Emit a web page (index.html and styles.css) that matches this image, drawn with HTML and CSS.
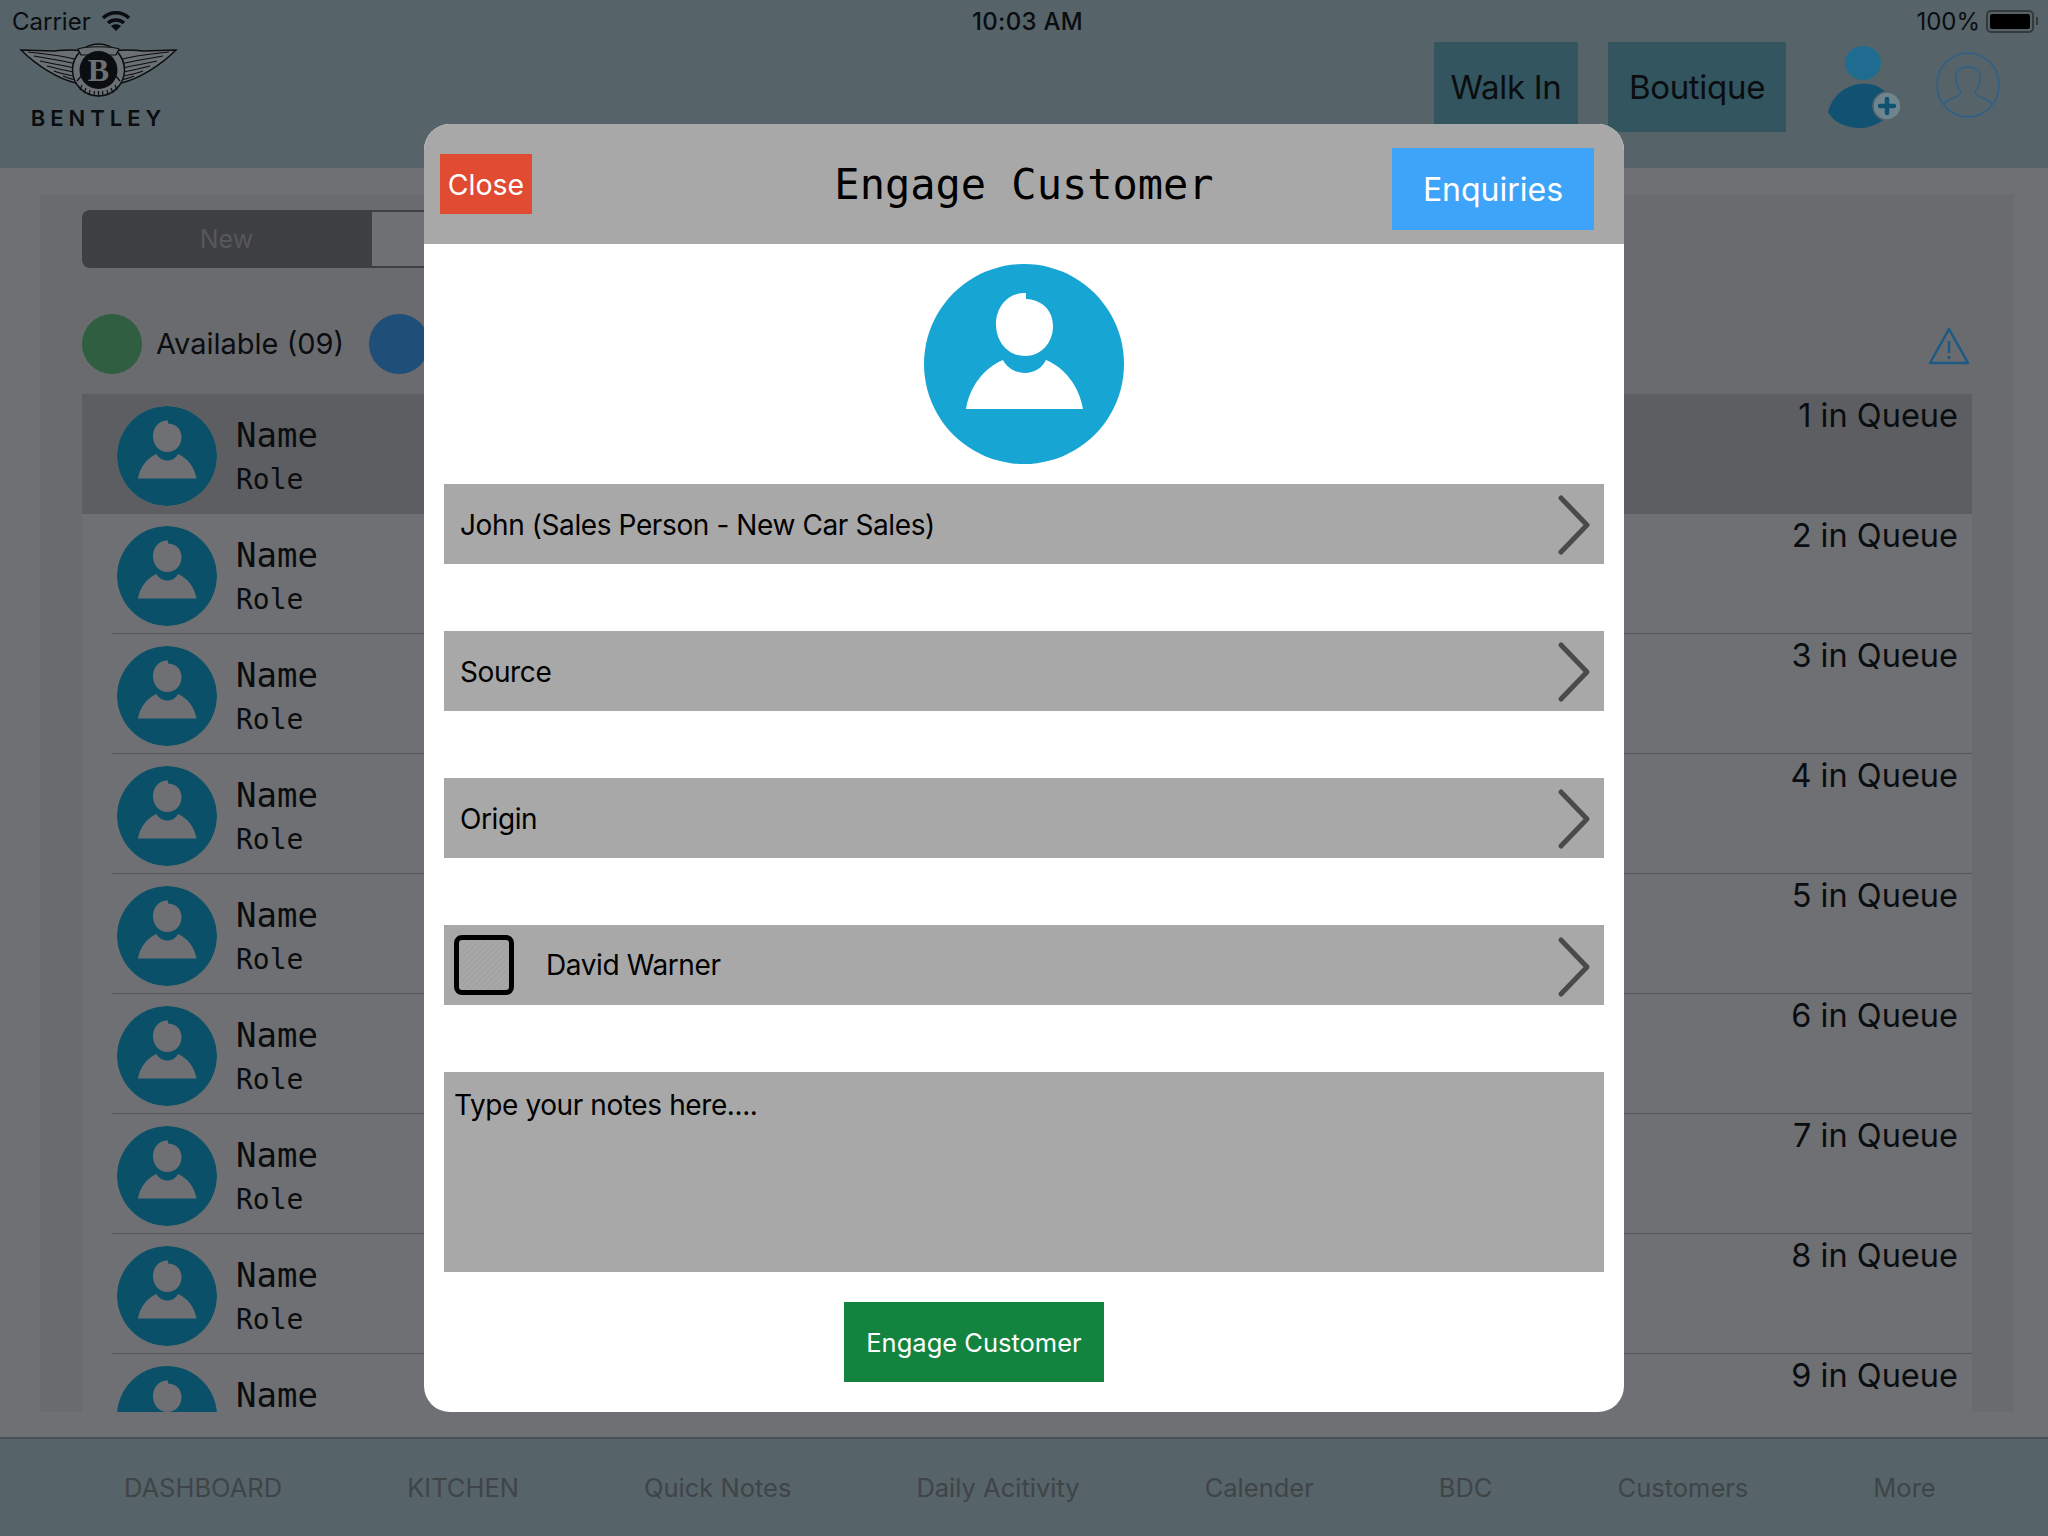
FILE: index.html
```html
<!DOCTYPE html>
<html lang="en">
<head>
  <meta charset="UTF-8">
  <title>Engage Customer</title>
  <link rel="stylesheet" href="styles.css">
</head>
<body>
  <svg class="defs" width="0" height="0">
    <symbol id="person" viewBox="0 0 200 200">
      <path fill-rule="evenodd" d="M100 0a100 100 0 1 0 .01 0z
        M102 29C84 28 72 43 72 60c0 18 12 32 29 32 16 0 28-13 28-30 0-15-10-26-27-27z
        M79 96C60 104 46 122 42 145H159C155 122 141 104 122 96c-4 8-12 13-21 13s-18-5-22-13z"/>
    </symbol>
    <symbol id="chevron" viewBox="0 0 36 62">
      <path d="M5 4L31 31 5 58" fill="none" stroke="currentColor" stroke-width="5" stroke-linecap="round" stroke-linejoin="round"/>
    </symbol>
    <g id="wing" fill="none" stroke="#0b0e10" stroke-width="1.200">
      <path d="M1 3L34 4C44 3 54 2 60 4L66 12 56 36C38 32 16 18 1 3z" fill="#6b7074" stroke-width="1.500"/>
      <path d="M8 5C28 7 46 9 62 14M14 9C30 12 46 14 60 18M20 14C34 17 46 19 59 22M27 19C38 22 48 24 58 26M34 24C42 27 50 28 57 30M43 29C47 31 52 32 56 33"/>
    </g>
  </svg>

  <header class="topbar">
    <div class="status">
      <div class="status-left">
        <span>Carrier</span>
        <svg class="wifi" viewBox="0 0 30 20">
          <g fill="none" stroke="#0a0d10" stroke-width="3.400">
            <path d="M2 7C9 0 21 0 28 7"/>
            <path d="M7 12C11.500 8 18.500 8 23 12"/>
          </g>
          <path d="M15 20L10 15C13 12.500 17 12.500 20 15z"/>
        </svg>
      </div>
      <span class="clock">10:03 AM</span>
      <div class="status-right">
        <span>100%</span>
        <span class="battery"><span class="battery-fill"></span></span>
        <span class="battery-tip"></span>
      </div>
    </div>
    <div class="toolbar">
      <div class="logo">
        <svg class="wings" viewBox="0 0 157 50">
          <use href="#wing"/>
          <use href="#wing" transform="matrix(-1 0 0 1 157 0)"/>
          <circle cx="78.500" cy="23" r="26" fill="#6b7074" stroke="#0b0e10" stroke-width="1.500"/>
          <path d="M58 2C66 -1 91 -1 99 2L96 8H61z" fill="#6b7074" stroke="#0b0e10" stroke-width="1.200"/>
          <g stroke="#0b0e10" stroke-width="1.200">
            <path d="M62 38L60 43M66 41L64 46M70 43L69 48M74.500 44L74 49M78.500 44V50M82.500 44L83 49M87 43L88 48M91 41L93 46M95 38L97 43"/>
            <path d="M57 34L62 28M100 34L95 28" />
          </g>
          <circle cx="78.500" cy="23" r="19" fill="#0b0e10"/>
          <text class="logo-b" x="78.500" y="34" text-anchor="middle">B</text>
        </svg>
        <span class="logo-name">BENTLEY</span>
      </div>
      <div class="tool-actions">
        <button class="tool-btn">Walk In</button>
        <button class="tool-btn">Boutique</button>
        <svg class="add-user" viewBox="0 0 74 82">
          <ellipse cx="35" cy="17" rx="18" ry="17" fill="#1f6c90"/>
          <path d="M32 38C48 36 62 44 64 62 58 76 44 82 32 82 18 82 5 76 0 66 4 50 16 40 32 38z" fill="#115273"/>
          <circle cx="59" cy="60" r="14" fill="#6e858e" stroke="#566369" stroke-width="1.500"/>
          <path d="M59 53V67M52 60H66" stroke="#115273" stroke-width="4.500" stroke-linecap="round"/>
        </svg>
        <svg class="profile" viewBox="0 0 64 66">
          <g fill="none" stroke="#2f6088" stroke-width="1.500">
            <ellipse cx="32" cy="33" rx="31" ry="32"/>
            <path d="M8 52C12 46 24 46 25 40 20 34 20 28 20 25 20 17 25 15 32 15S44 17 44 25C44 28 44 34 39 40 40 46 52 46 56 52"/>
          </g>
        </svg>
      </div>
    </div>
  </header>

  <main class="content">
    <section class="panel">
      <div class="segment">
        <span class="segment-on">New</span>
        <span class="segment-off"></span>
      </div>
      <div class="legend">
        <span class="dot dot-green"></span>
        <span class="legend-label">Available (09)</span>
        <span class="dot dot-blue"></span>
        <svg class="warning" viewBox="0 0 42 38">
          <path d="M21 2L40 36H2z" fill="none" stroke="#1c5a84" stroke-width="2.500" stroke-linejoin="round"/>
          <path d="M21 14V26M21 29V32" stroke="#1c5a84" stroke-width="2.500"/>
        </svg>
      </div>
      <div class="list">
        <div class="row row-active"><div class="row-inner"><svg class="row-avatar"><use href="#person"/></svg><div class="row-text"><span class="row-name">Name</span><span class="row-role">Role</span></div><span class="queue">1 in Queue</span></div></div>
        <div class="row"><div class="row-inner"><svg class="row-avatar"><use href="#person"/></svg><div class="row-text"><span class="row-name">Name</span><span class="row-role">Role</span></div><span class="queue">2 in Queue</span></div></div>
        <div class="row"><div class="row-inner"><svg class="row-avatar"><use href="#person"/></svg><div class="row-text"><span class="row-name">Name</span><span class="row-role">Role</span></div><span class="queue">3 in Queue</span></div></div>
        <div class="row"><div class="row-inner"><svg class="row-avatar"><use href="#person"/></svg><div class="row-text"><span class="row-name">Name</span><span class="row-role">Role</span></div><span class="queue">4 in Queue</span></div></div>
        <div class="row"><div class="row-inner"><svg class="row-avatar"><use href="#person"/></svg><div class="row-text"><span class="row-name">Name</span><span class="row-role">Role</span></div><span class="queue">5 in Queue</span></div></div>
        <div class="row"><div class="row-inner"><svg class="row-avatar"><use href="#person"/></svg><div class="row-text"><span class="row-name">Name</span><span class="row-role">Role</span></div><span class="queue">6 in Queue</span></div></div>
        <div class="row"><div class="row-inner"><svg class="row-avatar"><use href="#person"/></svg><div class="row-text"><span class="row-name">Name</span><span class="row-role">Role</span></div><span class="queue">7 in Queue</span></div></div>
        <div class="row"><div class="row-inner"><svg class="row-avatar"><use href="#person"/></svg><div class="row-text"><span class="row-name">Name</span><span class="row-role">Role</span></div><span class="queue">8 in Queue</span></div></div>
        <div class="row row-last"><div class="row-inner"><svg class="row-avatar" viewBox="0 0 100 46"><use href="#person" width="100" height="100"/></svg><div class="row-text"><span class="row-name">Name</span></div><span class="queue">9 in Queue</span></div></div>
      </div>
    </section>
  </main>

  <footer class="tabs">
    <span>DASHBOARD</span>
    <span>KITCHEN</span>
    <span>Quick Notes</span>
    <span>Daily Acitivity</span>
    <span>Calender</span>
    <span>BDC</span>
    <span>Customers</span>
    <span>More</span>
  </footer>

  <div class="modal">
    <div class="modal-head">
      <button class="btn-close">Close</button>
      <h1 class="modal-title">Engage Customer</h1>
      <button class="btn-enquiries">Enquiries</button>
    </div>
    <div class="modal-body">
      <svg class="modal-avatar"><use href="#person"/></svg>
      <div class="field"><span>John (Sales Person - New Car Sales)</span><svg class="chevron"><use href="#chevron"/></svg></div>
      <div class="field"><span>Source</span><svg class="chevron"><use href="#chevron"/></svg></div>
      <div class="field"><span>Origin</span><svg class="chevron"><use href="#chevron"/></svg></div>
      <div class="field field-check"><span class="checkbox"></span><span>David Warner</span><svg class="chevron"><use href="#chevron"/></svg></div>
      <div class="notes">Type your notes here....</div>
      <button class="btn-engage">Engage Customer</button>
    </div>
  </div>
</body>
</html>
```

FILE: styles.css
```css
* {
  box-sizing: border-box;
}

body {
  margin: 0;
  width: 2048px;
  height: 1536px;
  position: relative;
  overflow: hidden;
  display: flex;
  flex-direction: column;
  background-color: #6f7074;
  font-family: 'Inter', 'Roboto', sans-serif;
  color: #0a0d10;
}

button {
  border: none;
  font-family: inherit;
  padding: 0;
}

.defs {
  position: absolute;
}

/* top bar */
.topbar {
  height: 168px;
  flex: none;
  background-color: #566369;
  display: flex;
  flex-direction: column;
}

.status {
  height: 42px;
  padding: 0 10px 0 12px;
  display: grid;
  grid-template-columns: 1fr auto 1fr;
  align-items: center;
  font-size: 24px;
}

.status-left {
  display: flex;
  align-items: center;
  gap: 10px;
}

.wifi {
  width: 30px;
  height: 20px;
  fill: #0a0d10;
}

.clock {
  margin-left: 5px;
  font-weight: 500;
  letter-spacing: 0.3px;
}

.status-right {
  display: flex;
  align-items: center;
  justify-content: flex-end;
}

.battery {
  width: 48px;
  height: 23px;
  margin-left: 6px;
  border: 2px solid #34393c;
  border-radius: 5px;
  padding: 2px;
  display: flex;
}

.battery-fill {
  flex: 1;
  background-color: #000;
  border-radius: 2px;
}

.battery-tip {
  width: 2px;
  height: 8px;
  margin-left: 2px;
  background-color: #34393c;
}

.toolbar {
  flex: 1;
  display: flex;
  justify-content: space-between;
  align-items: flex-start;
}

.logo {
  margin: 5px 0 0 20px;
  width: 157px;
  display: flex;
  flex-direction: column;
  align-items: center;
}

.wings {
  width: 157px;
  height: 50px;
  overflow: visible;
}

.logo-b {
  font-family: 'Liberation Serif', serif;
  font-size: 32px;
  font-weight: 700;
  fill: #6b7074;
}

.logo-name {
  margin-top: 10px;
  font-size: 22px;
  line-height: 22px;
  font-weight: 600;
  letter-spacing: 5px;
  white-space: nowrap;
}

.tool-actions {
  display: flex;
  align-items: flex-start;
  padding-right: 48px;
}

.tool-btn {
  height: 90px;
  background-color: #32555f;
  color: #0a0d10;
  font-size: 33px;
  letter-spacing: -0.3px;
}

.tool-btn:nth-child(1) {
  width: 144px;
  margin-right: 30px;
}

.tool-btn:nth-child(2) {
  width: 178px;
  margin-right: 42px;
}

.add-user {
  width: 74px;
  height: 82px;
  margin-top: 4px;
  margin-right: 34px;
}

.profile {
  width: 64px;
  height: 66px;
  margin-top: 10px;
}

/* list behind the dialog */
.content {
  flex: 1;
  min-height: 0;
  padding: 26px 34px 25px 40px;
  display: flex;
}

.panel {
  flex: 1;
  background-color: #6a6b6f;
  padding: 16px 42px 0;
}

.segment {
  width: 900px;
  height: 58px;
  background-color: #3e3f41;
  border-radius: 8px;
  padding: 2px;
  display: flex;
}

.segment-on {
  width: 288px;
  padding-right: 3px;
  text-align: center;
  line-height: 54px;
  font-size: 25px;
  color: #56585b;
}

.segment-off {
  flex: 1;
  background-color: #6f7074;
}

.legend {
  margin-top: 46px;
  height: 60px;
  display: flex;
  align-items: center;
}

.dot {
  width: 60px;
  height: 60px;
  border-radius: 50%;
}

.dot-green {
  background-color: #2f5e41;
}

.dot-blue {
  background-color: #1f4f78;
  margin-left: 25px;
}

.legend-label {
  margin-left: 14px;
  margin-top: -2px;
  font-size: 29px;
}

.warning {
  width: 42px;
  height: 38px;
  margin-left: auto;
  margin-right: 2px;
  margin-top: 3px;
}

.list {
  margin-top: 20px;
  width: 1890px;
  background-color: #6f7074;
}

.row {
  height: 120px;
  padding-left: 30px;
}

.row-active {
  background-color: #5d5e62;
}

.row-last {
  height: 58px;
}

.row-inner {
  height: 120px;
  display: flex;
  border-bottom: 1px solid #57585b;
}

.row-active .row-inner {
  border-bottom-color: #5d5e62;
}

.row-last .row-inner {
  height: 58px;
  border-bottom: none;
}

.row-avatar {
  width: 100px;
  height: 100px;
  margin: 12px 0 0 5px;
  border-radius: 50%;
  background-color: #6f7074;
  fill: #0a5069;
}

.row-last .row-avatar {
  height: 46px;
  border-radius: 0;
  background: none;
}

.row-text {
  margin: 24px 0 0 19px;
  display: flex;
  flex-direction: column;
  font-family: 'DejaVu Sans Mono', monospace;
}

.row-name {
  font-size: 34px;
  line-height: 34px;
}

.row-role {
  font-size: 28px;
  line-height: 55px;
}

.queue {
  margin-left: auto;
  margin-right: 14px;
  margin-top: 2px;
  font-size: 32.500px;
  line-height: 40px;
}

/* tab bar */
.tabs {
  height: 99px;
  flex: none;
  background-color: #566369;
  border-top: 2px solid #4b5054;
  padding-left: 124px;
  display: flex;
  align-items: center;
  gap: 125px;
  font-size: 25.500px;
  color: #3f4447;
}

/* dialog */
.modal {
  position: absolute;
  left: 424px;
  top: 124px;
  width: 1200px;
  height: 1288px;
  background-color: #fff;
  border-radius: 26px;
  overflow: hidden;
}

.modal-head {
  height: 120px;
  background-color: #a8a8a8;
  padding: 0 30px;
  display: grid;
  grid-template-columns: 1fr auto 1fr;
  align-items: center;
}

.btn-close {
  margin-left: -14px;
  width: 92px;
  height: 60px;
  background-color: #e04b31;
  color: #fff;
  font-size: 28.500px;
}

.modal-title {
  margin: 0;
  font-family: 'DejaVu Sans Mono', monospace;
  font-size: 42px;
  font-weight: normal;
  color: #000;
}

.btn-enquiries {
  justify-self: end;
  width: 202px;
  height: 82px;
  margin-top: 10px;
  background-color: #3ea4fa;
  color: #fff;
  font-size: 32px;
}

.modal-body {
  padding: 20px 20px 0;
  display: flex;
  flex-direction: column;
}

.modal-avatar {
  align-self: center;
  width: 200px;
  height: 200px;
  flex: none;
  fill: #17a5d4;
}

.field {
  margin-top: 20px;
  height: 80px;
  flex: none;
  background-color: #a8a8a8;
  padding: 1px 12px 0 16px;
  display: flex;
  align-items: center;
  font-size: 28px;
  letter-spacing: -0.4px;
  color: #000;
}

.field + .field {
  margin-top: 67px;
}

.field-check {
  padding-top: 0;
}

.chevron {
  margin-left: auto;
  margin-top: 1px;
  width: 36px;
  height: 62px;
  color: #4a4a4a;
}

.field-check .chevron {
  margin-top: 3px;
}

.checkbox {
  width: 60px;
  height: 60px;
  margin-left: -6px;
  margin-right: 32px;
  border: 5px solid #000;
  border-radius: 8px;
  background: repeating-linear-gradient(135deg, #a8a8a8, #a8a8a8 2px, #a3a3a3 2px, #a3a3a3 4px);
}

.notes {
  margin-top: 67px;
  height: 200px;
  flex: none;
  background-color: #a8a8a8;
  padding: 16px 10px;
  font-size: 28px;
  letter-spacing: -0.4px;
  color: #000;
}

.btn-engage {
  margin: 30px 0 0 400px;
  width: 260px;
  height: 80px;
  background-color: #13843f;
  color: #fff;
  font-size: 25.500px;
}
```
